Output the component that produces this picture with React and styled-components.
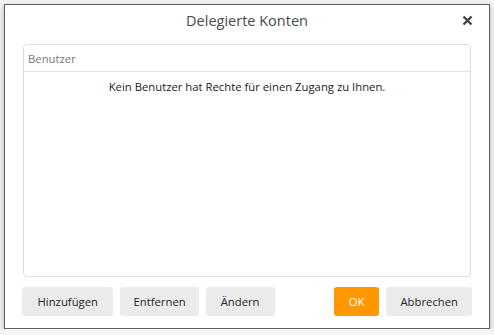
import React from 'react'
import styled, { createGlobalStyle } from 'styled-components'

const GlobalStyle = createGlobalStyle`
  html, body {
    margin: 0;
    padding: 0;
    background: #f4f4f4;
  }
  body {
    font-family: "Open Sans", "Noto Sans", sans-serif;
  }
`

const Dialog = styled.div`
  box-sizing: border-box;
  margin: 4px 0 0 4px;
  width: 486px;
  height: 325px;
  background: #fff;
  border: 1px solid #5e5e5e;
  box-shadow: 0 2px 6px rgba(0, 0, 0, 0.28);
  display: flex;
  flex-direction: column;
  padding: 0 17px 12px 17px;
`

const TitleBar = styled.div`
  position: relative;
  box-sizing: border-box;
  height: 39px;
  padding-bottom: 8px;
  display: flex;
  align-items: center;
  justify-content: center;
  flex-shrink: 0;
`

const Title = styled.h1`
  margin: 0;
  font-size: 14.5px;
  font-weight: 400;
  color: #4a4a4a;
`

const Close = styled.button`
  position: absolute;
  right: -3px;
  top: 7px;
  width: 16px;
  height: 16px;
  padding: 0;
  border: 0;
  background: none;
  display: flex;
  align-items: center;
  justify-content: center;
`

const Panel = styled.div`
  flex: 1;
  margin: 0 1px;
  border: 1px solid #dedede;
  border-radius: 4px;
  display: flex;
  flex-direction: column;
`

const PanelHead = styled.div`
  height: 26px;
  border-bottom: 1px solid #e3e3e3;
  display: flex;
  align-items: center;
  padding-left: 4px;
  font-size: 11.3px;
  color: #7a7a7a;
`

const Empty = styled.div`
  text-align: center;
  padding-top: 7px;
  font-size: 11.3px;
  color: #222;
`

const Footer = styled.div`
  display: flex;
  align-items: center;
  gap: 7px;
  margin-top: 10px;
`

const Button = styled.button`
  height: 29px;
  padding: 0 ${p => p.$pad || 13}px;
  border: 0;
  border-radius: 3px;
  background: ${p => p.$primary ? '#ff9800' : '#ebebeb'};
  color: ${p => p.$primary ? '#fff' : '#262626'};
  font-family: inherit;
  font-size: 11.3px;
  ${p => p.$push && 'margin-left: auto;'}
`

export default function App() {
  return (
    <>
      <GlobalStyle />
      <Dialog>
        <TitleBar>
          <Title>Delegierte Konten</Title>
          <Close aria-label="Schließen">
            <svg width="11" height="11" viewBox="0 0 11 11">
              <path d="M1.5 1.5 L9.5 9.5 M9.5 1.5 L1.5 9.5" stroke="#444" strokeWidth="2.4" />
            </svg>
          </Close>
        </TitleBar>
        <Panel>
          <PanelHead>Benutzer</PanelHead>
          <Empty>Kein Benutzer hat Rechte für einen Zugang zu Ihnen.</Empty>
        </Panel>
        <Footer>
          <Button $pad={15.5}>Hinzufügen</Button>
          <Button $pad={13}>Entfernen</Button>
          <Button $pad={15}>Ändern</Button>
          <Button $primary $push $pad={15}>OK</Button>
          <Button $pad={14}>Abbrechen</Button>
        </Footer>
      </Dialog>
    </>
  )
}
